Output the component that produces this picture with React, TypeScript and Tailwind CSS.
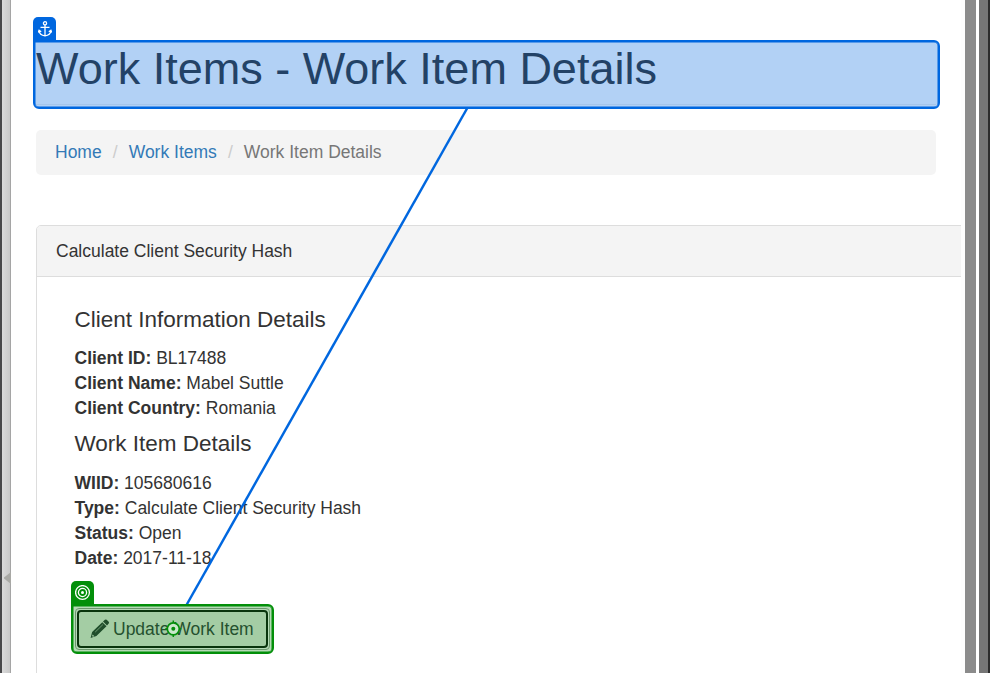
import React from "react";

function Field({ label, value }: { label: string; value: string }) {
  return (
    <p className="h-[25px] whitespace-nowrap">
      <b className="font-bold">{label}</b> {value}
    </p>
  );
}

function Anchor() {
  return (
    <svg className="h-[16px] w-[14px]" viewBox="0 0 14 16" fill="none" stroke="#fff" strokeWidth="1.3">
      <circle cx="7" cy="2.300" r="1.600" />
      <path d="M7 4v11M2.500 6.300h9M1.100 9.800c.3 3 2.800 4.700 5.900 5.100 3.100-.4 5.600-2.100 5.900-5.100M.2 11.600l.9-2.400 2.100 1.500M13.800 11.600l-.9-2.400-2.100 1.500" />
    </svg>
  );
}

function Pencil() {
  return (
    <svg className="h-[20px] w-[20px]" viewBox="0 0 20 20" fill="#204e2b">
      <path d="M13 2.500 14.900.8q.9-.8 1.800 0l2 2q.8.900 0 1.700L17 6.400zM12.300 3.200l4.200 4L6.400 17.100.6 19l1.500-6z" />
      <path d="m5.200 13.100 7.700-7.500" stroke="#a4cda4" strokeWidth=".6" />
      <path d="m2.600 15.400 1.800 1.800-1.500.5-.8-.8z" fill="#a4cda4" />
    </svg>
  );
}

export default function App() {
  return (
    <div className="relative flex h-[673px] w-[990px] overflow-hidden bg-white font-['Liberation_Sans',Arial,sans-serif] text-[17.5px] leading-[25px] text-[#333]">
      <div className="w-[2px] shrink-0 bg-[#48484a]" />
      <div className="w-[8px] shrink-0 bg-linear-to-r from-[#dadada] to-[#c9c9c9]" />
      <div className="w-px shrink-0 bg-[#a5a5a5]" />

      <main className="w-[950px] shrink-0 overflow-hidden pl-[25px] pt-[44px]">
        <h1 className="h-[61px] w-[900px] whitespace-nowrap border-b border-[#eee] text-[45px] leading-[50px]">
          Work Items - Work Item Details
        </h1>
        <nav className="mt-[25px] flex h-[45px] w-[900px] items-center rounded-[5px] bg-[#f4f4f4] pl-[19px] whitespace-nowrap">
          <span className="text-[#337ab7]">Home</span>
          <span className="w-[27px] text-center text-[#ccc]">/</span>
          <span className="text-[#337ab7]">Work Items</span>
          <span className="w-[27px] text-center text-[#ccc]">/</span>
          <span className="text-[#777]">Work Item Details</span>
        </nav>
        <section className="mt-[50px] h-[600px] w-[940px] rounded-[5px] border border-[#ddd]">
          <header className="flex h-[51px] items-center rounded-t-[4px] border-b border-[#ddd] bg-[#f4f4f4] pl-[19px]">
            Calculate Client Security Hash
          </header>
          <div className="pl-[37.500px] pt-[30px]">
            <h4 className="h-[39px] text-[22.500px] leading-[25px]">Client Information Details</h4>
            <Field label="Client ID:" value="BL17488" />
            <Field label="Client Name:" value="Mabel Suttle" />
            <Field label="Client Country:" value="Romania" />
            <h4 className="mt-[10px] h-[40px] text-[22.500px] leading-[25px]">Work Item Details</h4>
            <Field label="WIID:" value="105680616" />
            <Field label="Type:" value="Calculate Client Security Hash" />
            <Field label="Status:" value="Open" />
            <Field label="Date:" value="2017-11-18" />
          </div>
        </section>
      </main>

      <div className="w-[4px] shrink-0 bg-[#fdfdfd]" />
      <div className="w-[11px] shrink-0 bg-[#8b8b8b]" />
      <div className="w-[3px] shrink-0 bg-white" />
      <div className="w-[9px] shrink-0 bg-[#767676]" />
      <div className="w-[2px] shrink-0 bg-[#2c2c2c]" />

      {/* Splitter handle */}
      <svg className="absolute left-[4px] top-[572px] h-[12px] w-[7px]" viewBox="0 0 7 12">
        <path d="M7 0v12L0 6.500v-1z" fill="#a9a9a5" />
      </svg>

      {/* Connector from the anchor to the target */}
      <svg className="absolute left-0 top-0 h-[673px] w-[990px]" viewBox="0 0 990 673">
        <path d="M467.300 108 186.500 605" stroke="#0067df" strokeWidth="2.500" />
      </svg>

      {/* Anchor selection */}
      <div className="absolute left-[33px] top-[40px] h-[69px] w-[907px] rounded-[6px] rounded-tl-none border-2 border-[#0067df] bg-[#0067df]/30 shadow-[inset_0_0_0_0.5px_#0067df]" />
      <div className="absolute left-[33px] top-[17px] flex h-[24px] w-[23px] items-center justify-center rounded-t-[5px] bg-[#0067df]">
        <Anchor />
      </div>

      {/* Target selection */}
      <div className="absolute left-[71px] top-[604px] h-[50px] w-[203px] rounded-[6px] rounded-tl-none border-2 border-[#038f0a] bg-[#b5dab6] p-[2px] shadow-[inset_0_0_0_0.5px_#038f0a]">
        <div className="h-full rounded-[4px] border border-[#6b976c] p-px">
          <button className="flex h-full w-full items-center rounded-[4px] border-2 border-[#09340c] bg-[#a4cda4] pl-[10.500px] text-left whitespace-nowrap text-[#24512f]">
            <Pencil />
            <span className="ml-[3.500px]">Update Work Item</span>
          </button>
        </div>
      </div>
      <div className="absolute left-[71px] top-[581px] flex h-[24px] w-[23px] items-center justify-center rounded-t-[5px] bg-[#038f0a]">
        <svg className="h-[16px] w-[16px]" viewBox="0 0 16 16" fill="none" stroke="#fff" strokeWidth="1.300">
          <circle cx="7.500" cy="7.500" r="6.900" />
          <circle cx="7.500" cy="7.500" r="4.100" />
          <circle cx="7.500" cy="7.500" r="1.500" fill="#fff" stroke="none" />
        </svg>
      </div>
      <svg className="absolute left-[164px] top-[620px] h-[18px] w-[18px]" viewBox="0 0 18 18">
        <path d="M9.300.5v16.500M1.300 8.800h16" stroke="#038f0a" strokeWidth="1.500" />
        <circle cx="9.300" cy="8.800" r="6" fill="#c9e8ca" stroke="#038f0a" strokeWidth="1.700" />
        <circle cx="9.300" cy="8.800" r="2" fill="#038f0a" />
      </svg>
    </div>
  );
}
